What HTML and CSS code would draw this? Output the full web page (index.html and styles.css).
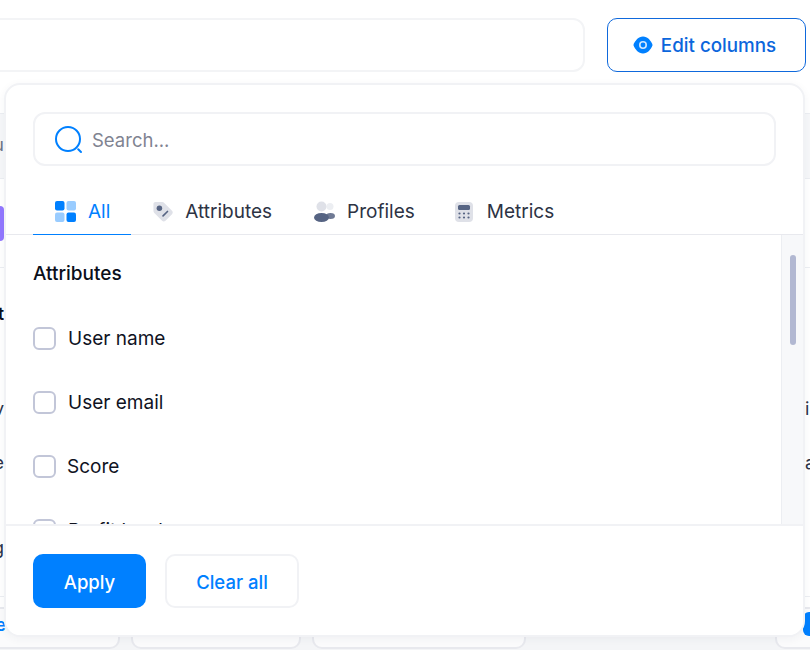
FILE: index.html
```html
<!DOCTYPE html>
<html lang="en">
<head>
<meta charset="utf-8">
<title>Edit columns</title>
<link rel="stylesheet" href="styles.css">
</head>
<body>
<div class="page">
  <header class="toolbar">
    <div class="toolbar-box"></div>
    <button class="edit-btn" type="button">
      <svg class="eye" viewBox="0 0 20 18" width="20" height="18"><path d="M10 .5C14.600.5 18 4.600 19.600 9 18 13.400 14.600 17.500 10 17.500S2 13.400.4 9C2 4.600 5.400.5 10 .5Z" fill="#0080ff"/><circle cx="10" cy="9" r="4" fill="#cfe6ff"/><circle cx="10" cy="9" r="2.400" fill="#0080ff"/></svg>
      Edit columns
    </button>
  </header>

  <div class="table">
    <div class="bg-row bg-head"><span class="frag left">u</span></div>
    <div class="bg-row bg-first"><span class="purple"></span></div>
    <div class="bg-body">
      <div class="line line-t"><span class="frag left strong">t</span></div>
      <div class="line line-v"><span class="frag left">v</span><span class="frag right">i</span></div>
      <div class="line line-e"><span class="frag left">e</span><span class="frag right">a</span></div>
      <div class="line line-g"><span class="frag left">g</span></div>
    </div>
    <div class="bg-foot">
      <div class="pill pill-a"><span class="link">e</span></div>
      <div class="pill pill-b"></div>
      <div class="pill pill-c"></div>
      <div class="pill pill-d"><span class="badge"></span></div>
    </div>
  </div>

  <section class="panel">
    <div class="search">
      <svg viewBox="0 0 28 28" width="28" height="28"><circle cx="13" cy="13" r="12" fill="none" stroke="#0080ff" stroke-width="2"/><path d="M23.200 23.200l2.800 2.800" stroke="#0080ff" stroke-width="2" stroke-linecap="round"/></svg>
      <span class="placeholder">Search...</span>
    </div>

    <nav class="tabs">
      <div class="tab tab-active">
        <svg class="tab-icon" viewBox="0 0 21 21" width="21" height="21"><rect width="9.500" height="9.500" rx="2" fill="#0080ff"/><rect x="11.500" width="9.500" height="9.500" rx="2" fill="#99ccff"/><rect y="11.500" width="9.500" height="9.500" rx="2" fill="#99ccff"/><rect x="11.500" y="11.500" width="9.500" height="9.500" rx="2" fill="#0080ff"/></svg>
        All
      </div>
      <div class="tab">
        <svg class="tab-icon" viewBox="0.500 0 19 19" width="21" height="21"><path d="M3.600 1h6.200c.7 0 1.300.3 1.800.8l7 7c.9.9.9 2.200 0 3.100l-5.900 5.900c-.9.9-2.200.9-3.100 0l-7-7C2.100 10.300 1.800 9.700 1.800 9V2.800C1.800 1.800 2.600 1 3.600 1Z" fill="#dfe1e8"/><circle cx="7.200" cy="6.500" r="2.500" fill="#566483"/><path d="M10.500 13.500l4-4" stroke="#566483" stroke-width="1.500" stroke-linecap="round"/></svg>
        Attributes
      </div>
      <div class="tab">
        <svg class="tab-icon" viewBox="0 0 21 21" width="21" height="21"><circle cx="16" cy="5.500" r="3.500" fill="#eceef2"/><ellipse cx="16.500" cy="15" rx="4.500" ry="3" fill="#6f7a94"/><circle cx="7.500" cy="5.500" r="5" fill="#dfe1e8"/><ellipse cx="7.500" cy="16.500" rx="7.500" ry="4.500" fill="#566483"/></svg>
        Profiles
      </div>
      <div class="tab tab-metrics">
        <svg class="tab-icon" viewBox="0 0 21 21" width="21" height="21"><rect x="1" y="1" width="18" height="20" rx="4" fill="#dfe1e8"/><rect x="4" y="4" width="12" height="5" rx="1.500" fill="#566483"/><g fill="#566483"><circle cx="5.500" cy="12.500" r="1.100"/><circle cx="10" cy="12.500" r="1.100"/><circle cx="14.500" cy="12.500" r="1.100"/><circle cx="5.500" cy="16.500" r="1.100"/><circle cx="10" cy="16.500" r="1.100"/><circle cx="14.500" cy="16.500" r="1.100"/></g></svg>
        Metrics
      </div>
    </nav>

    <div class="content">
      <div class="list">
        <h3 class="list-title">Attributes</h3>
        <label class="option"><span class="check"></span>User name</label>
        <label class="option"><span class="check"></span>User email</label>
        <label class="option option-tight"><span class="check"></span>Score</label>
        <label class="option"><span class="check"></span>Profit level</label>
      </div>
      <div class="gutter"><div class="thumb"></div></div>
    </div>

    <footer class="actions">
      <button class="btn btn-primary" type="button">Apply</button>
      <button class="btn btn-ghost" type="button">Clear all</button>
    </footer>
  </section>
</div>
</body>
</html>
```
FILE: styles.css
```css
* { box-sizing: border-box; }
html, body { margin: 0; padding: 0; }
body { font-family: Inter, "Liberation Sans", sans-serif; background: #fff; color: #0b0f1a; }
button { font-family: inherit; }

.page { position: relative; width: 810px; height: 650px; overflow: hidden; background: #fff; }

.toolbar { display: flex; gap: 22px; height: 113px; padding: 18px 4px 0 0; margin-left: -30px; width: 840px; }
.toolbar-box { flex: 1; height: 54px; border: 2px solid #f3f4f6; border-radius: 12px; background: #fff; }
.edit-btn { flex: none; width: 199px; height: 54px; display: flex; align-items: center; justify-content: center; gap: 8px; background: #fff; border: 1px solid #0f69dc; border-radius: 10px; color: #0b66dc; font-size: 18.800px; font-weight: 500; padding: 0 4px 0 0; }
.eye { flex: none; }

.table { display: flex; flex-direction: column; font-size: 18px; }
.bg-row { position: relative; display: flex; align-items: center; border-top: 1px solid #eceef2; }
.bg-head { height: 65px; background: #f6f7f9; }
.bg-first { height: 89px; }
.bg-body { height: 330px; border-top: 1px solid #eceef2; border-bottom: 1px solid #eceef2; padding-top: 36px; display: flex; flex-direction: column; }
.line { height: 20px; line-height: 20px; display: flex; justify-content: space-between; }
.line-v { margin-top: 75px; }
.line-e { margin-top: 34px; }
.line-g { margin-top: 65px; }

.frag { display: block; width: 4px; overflow: hidden; color: #2b3348; line-height: 20px; }
.frag.left { direction: rtl; text-align: right; width: 4px; }
.frag.right { width: 5px; }
.bg-head .frag.left { margin-top: -2px; color: #6d7486; }
.strong { font-weight: 600; color: #0b0f1a; }
.purple { display: block; width: 4px; height: 35px; background: #9277ff; border-radius: 0 4px 4px 0; }

.bg-foot { display: flex; gap: 11px; margin-left: -20px; height: 53px; padding-top: 10px; background: linear-gradient(#fff 0, #fff 40px, #f4f5f7 40px); }
.pill { flex: none; height: 42px; border: 2px solid #e8e9ee; border-radius: 10px; background: #fbfbfc; }
.pill-a { width: 140px; overflow: hidden; color: #0080ff; font-weight: 600; line-height: 32px; }
.pill-a .link { display: block; width: 24px; text-align: right; }
.pill-b { width: 170px; }
.pill-c { width: 214px; }
.pill-d { width: 80px; margin-left: 238px; padding: 3px 0 0 26px; }
.badge { display: block; width: 24px; height: 24px; border-radius: 6px; background: #0080ff; }

.panel { position: absolute; left: 4px; top: 83px; width: 801px; height: 554px; display: flex; flex-direction: column; background: #fff; border: 2px solid #f1f2f5; border-radius: 16px; box-shadow: 0 2px 8px rgba(40, 50, 80, .05); overflow: hidden; }

.search { flex: none; display: flex; align-items: center; gap: 10px; margin: 27px 27px 0; height: 54px; padding: 1px 0 0 20px; border: 2px solid #f1f2f5; border-radius: 12px; }
.search svg { flex: none; }
.placeholder { font-size: 18.500px; color: #7f8391; margin-left: -1px; }

.tabs { flex: none; display: flex; height: 51px; margin-top: 18px; padding-left: 27px; border-bottom: 1px solid #e8e9ee; }
.tab { display: flex; align-items: center; gap: 12px; padding: 5px 21px 0; height: 51px; font-size: 19px; color: #2d3344; border-bottom: 1px solid transparent; }
.tab-active { padding-left: 22px; color: #0080ff; border-bottom-color: #0080ff; }
.tab-metrics { margin-left: -3px; }
.tab-icon { flex: none; }

.content { flex: 1; min-height: 0; display: flex; overflow: hidden; }
.list { flex: 1; padding: 27px 0 0 27px; }
.list-title { margin: 0 0 40px; height: 24px; line-height: 24px; font-size: 19px; font-weight: 500; color: #0b0f1a; }
.option { display: flex; align-items: center; gap: 12px; height: 24px; margin-bottom: 40px; font-size: 19px; color: #10131f; }
.check { flex: none; width: 23px; height: 23px; border: 2px solid #c2c6d8; border-radius: 6px; background: #fff; }
.option-tight { gap: 11px; }

.gutter { flex: none; width: 22px; padding: 20px 0 0 8px; background: #f7f8fa; border-left: 1px solid #eceef2; }
.thumb { width: 6px; height: 90px; border-radius: 3px; background: #b2b8d2; }

.actions { flex: none; height: 111px; display: flex; gap: 19px; padding: 28px 0 0 27px; background: #fff; border-top: 2px solid #f1f2f5; }
.btn { height: 54px; border-radius: 10px; font-size: 18.500px; font-weight: 500; padding: 1px 0 0; }
.btn-primary { width: 113px; background: #0080ff; border: 0; color: #fff; }
.btn-ghost { width: 134px; background: #fff; border: 2px solid #f1f2f5; color: #0080ff; }
```
